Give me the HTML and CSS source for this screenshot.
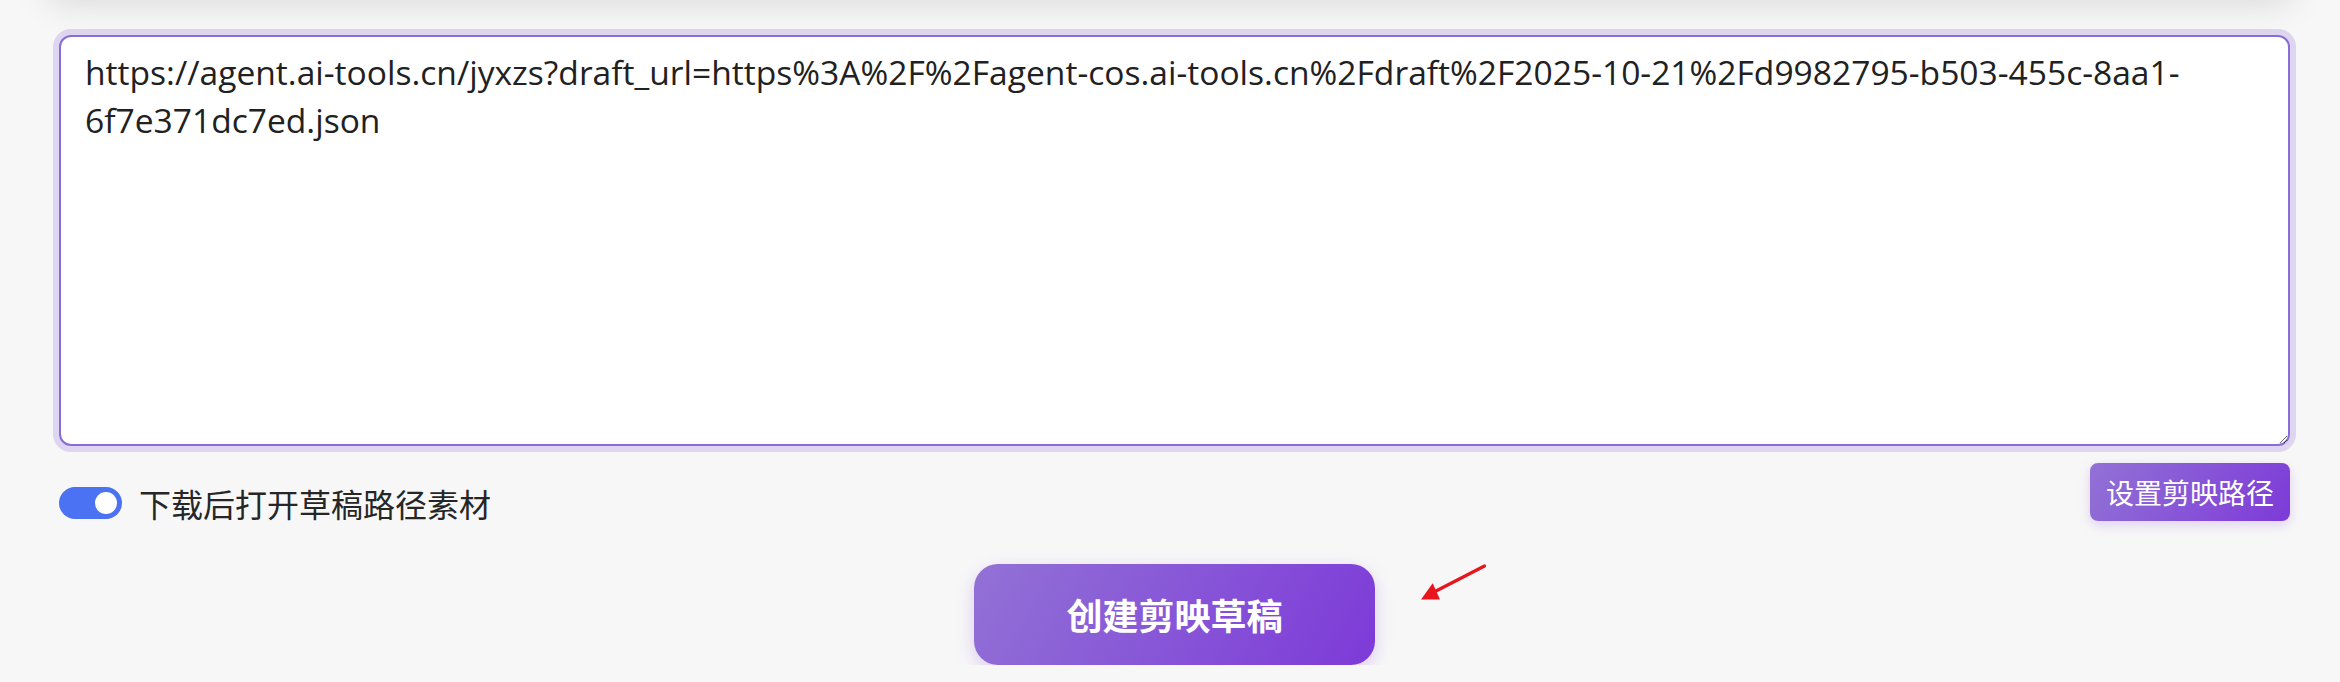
FILE: index.html
```html
<!DOCTYPE html>
<html lang="zh-CN">
<head>
<meta charset="utf-8">
<title>创建剪映草稿</title>
<link rel="stylesheet" href="styles.css">
</head>
<body>
<div class="prev-card"></div>
<main class="container">
  <textarea class="url-input" spellcheck="false">https://agent.ai-tools.cn/jyxzs?draft_url=https%3A%2F%2Fagent-cos.ai-tools.cn%2Fdraft%2F2025-10-21%2Fd9982795-b503-455c-8aa1-6f7e371dc7ed.json</textarea>
  <div class="options-row">
    <label class="switch-group">
      <span class="switch"><span class="knob"></span></span>
      <span class="switch-label">下载后打开草稿路径素材</span>
    </label>
    <button class="btn-path" type="button">设置剪映路径</button>
  </div>
  <div class="create-row">
    <button class="btn-create" type="button">创建剪映草稿</button>
  </div>
</main>
<svg class="annot-arrow" width="90" height="60" viewBox="0 0 90 60" aria-hidden="true">
  <line x1="74.5" y1="11" x2="26" y2="36" stroke="#e8151d" stroke-width="3.2" stroke-linecap="round"/>
  <polygon points="11,44.5 22.7,28.3 30,44.5" fill="#e8151d"/>
</svg>
</body>
</html>
```

FILE: styles.css
```css
html, body {
  margin: 0;
  padding: 0;
}

body {
  background: #f7f7f7;
  font-family: "Noto Sans CJK SC", "Open Sans", sans-serif;
  color: #222;
  overflow: hidden;
}

.prev-card {
  height: 40px;
  margin: -40px 50px 0 50px;
  background: #f7f7f7;
  box-shadow: 0 0 36px rgba(0, 0, 0, 0.15);
}

.container {
  padding: 35px 50px 0 59px;
}

.url-input {
  display: block;
  width: 100%;
  height: 411px;
  box-sizing: border-box;
  margin: 0;
  padding: 11px 24px;
  border: 2px solid #8a6cd6;
  border-radius: 12px;
  background: #fff;
  box-shadow: 0 0 0 6px rgba(147, 112, 219, 0.25);
  outline: none;
  resize: vertical;
  font-family: "Open Sans", "Noto Sans", sans-serif;
  font-size: 33.6px;
  line-height: 48px;
  color: #212121;
}

.options-row {
  display: flex;
  justify-content: space-between;
  align-items: flex-start;
  margin-top: 17px;
}

.switch-group {
  display: flex;
  align-items: center;
  gap: 17px;
  margin-top: 16px;
  height: 48px;
}

.switch {
  display: flex;
  justify-content: flex-end;
  align-items: center;
  box-sizing: border-box;
  width: 63px;
  height: 32px;
  padding: 0 5px;
  border-radius: 16px;
  background: #4a72f2;
}

.knob {
  width: 22px;
  height: 22px;
  border-radius: 50%;
  background: #fff;
}

.switch-label {
  font-size: 32px;
  line-height: 48px;
  color: #262626;
}

.btn-path {
  margin: 0;
  padding: 8px 16px;
  border: none;
  border-radius: 8px;
  background: linear-gradient(120deg, #9272d6 0%, #7d3ad8 100%);
  box-shadow: 0 4px 12px rgba(126, 59, 216, 0.2);
  color: #fff;
  font-family: "Noto Sans CJK SC", sans-serif;
  font-size: 28px;
  line-height: 42px;
}

.create-row {
  display: flex;
  justify-content: center;
  margin-top: 37px;
}

.btn-create {
  margin: 0;
  padding: 24px 92px;
  border: none;
  border-radius: 24px;
  background: linear-gradient(120deg, #9272d6 0%, #7d3ad8 100%);
  box-shadow: 0 6px 18px rgba(126, 59, 216, 0.22);
  color: #fff;
  font-family: "Noto Sans CJK SC", sans-serif;
  font-size: 36px;
  font-weight: 700;
  line-height: 53px;
}

.annot-arrow {
  position: absolute;
  left: 1410px;
  top: 555px;
}
```
